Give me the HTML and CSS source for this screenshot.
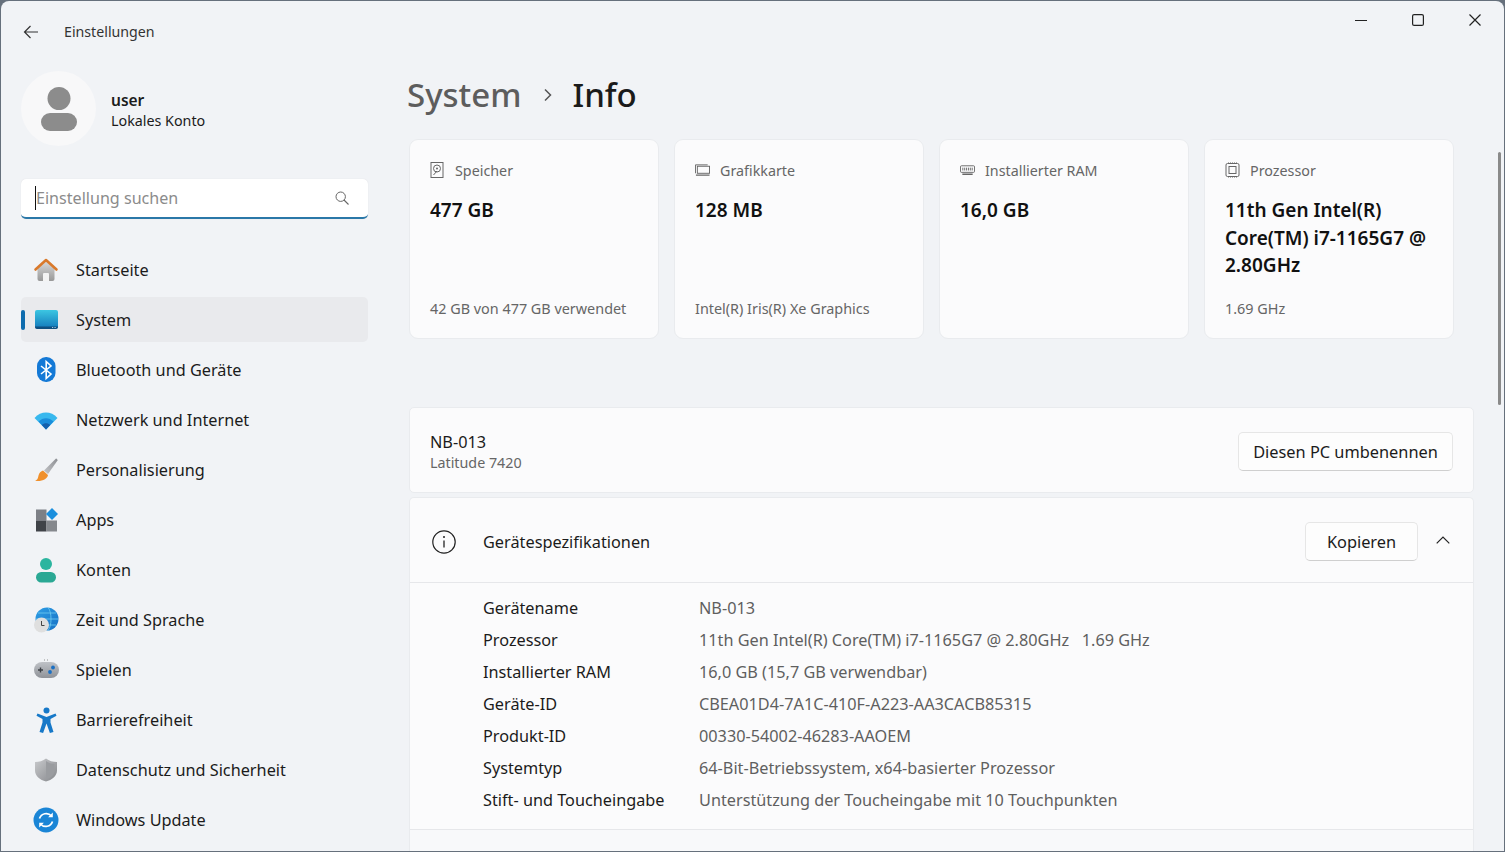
FILE: index.html
```html
<!DOCTYPE html>
<html lang="de">
<head>
    <meta charset="UTF-8">
    <meta name="viewport" content="width=device-width, initial-scale=1.0">
    <title>Einstellungen</title>
    <link rel="stylesheet" href="styles.css">
</head>
<body>
<div class="window">
    <!-- Title bar -->
    <header class="titlebar">
        <div class="titlebar-left">
            <svg class="back-icon" viewBox="0 0 16 14" width="16" height="14"><path d="M15 7H1.5M7.5 1 1.5 7l6 6" fill="none" stroke="#333" stroke-width="1.2"/></svg>
            <span class="app-title">Einstellungen</span>
        </div>
        <div class="window-controls">
            <svg viewBox="0 0 12 12" width="12" height="12"><path d="M0 6.5h12" stroke="#222" stroke-width="1.2"/></svg>
            <svg viewBox="0 0 12 12" width="12" height="12"><rect x=".6" y=".6" width="10.8" height="10.8" rx="1.5" fill="none" stroke="#222" stroke-width="1.2"/></svg>
            <svg viewBox="0 0 12 12" width="12" height="12"><path d="M.5.5l11 11M11.500.5l-11 11" stroke="#222" stroke-width="1.2"/></svg>
        </div>
    </header>

    <div class="main">
        <!-- Sidebar -->
        <aside class="sidebar">
            <div class="profile">
                <div class="avatar">
                    <svg viewBox="0 0 38 44" width="38" height="44"><circle cx="19" cy="11.500" r="11.500" fill="#8c8c8c"/><rect x="1" y="26" width="36" height="18" rx="9" fill="#8c8c8c"/></svg>
                </div>
                <div class="profile-text">
                    <div class="profile-name">user</div>
                    <div class="profile-type">Lokales Konto</div>
                </div>
            </div>

            <div class="search">
                <span class="search-caret"></span>
                <span class="search-text">Einstellung suchen</span>
                <svg viewBox="0 0 14 14" width="14" height="14"><circle cx="5.700" cy="5.700" r="4.700" fill="none" stroke="#666" stroke-width="1"/><path d="M9 9l4.500 4.500" stroke="#666" stroke-width="1.100"/></svg>
            </div>

            <nav class="nav">
                <a class="nav-item">
                    <svg class="nav-icon" viewBox="0 0 24 24"><defs><linearGradient id="homeBody" x1="0" y1="0" x2="0" y2="1"><stop offset="0" stop-color="#d8d8d8"/><stop offset="1" stop-color="#989898"/></linearGradient></defs><path d="M3.500 10.500 12 3.500l8.500 7V21a2 2 0 0 1-2 2h-13a2 2 0 0 1-2-2z" fill="url(#homeBody)"/><path d="M9 23v-7a1 1 0 0 1 1-1h4a1 1 0 0 1 1 1v7z" fill="#f3f3f3"/><path d="M1.500 11.500 12 2l10.500 9.500" fill="none" stroke="#d9792b" stroke-width="2.600" stroke-linecap="round" stroke-linejoin="round"/></svg>
                    <span>Startseite</span>
                </a>
                <a class="nav-item active">
                    <svg class="nav-icon" viewBox="0 0 24 24"><defs><linearGradient id="sysScreen" x1="0" y1="0" x2="0" y2="1"><stop offset="0" stop-color="#3cc6e2"/><stop offset="1" stop-color="#1379bb"/></linearGradient></defs><rect x="1" y="2" width="23" height="18.500" rx="2" fill="url(#sysScreen)"/><path d="M1 18.500h23V19a2 2 0 0 1-2 2H3a2 2 0 0 1-2-2z" fill="#0f4f80"/><path d="M18 19.500h1.200M20.500 19.500h1.200" stroke="#cfe8f5" stroke-width=".8"/></svg>
                    <span>System</span>
                </a>
                <a class="nav-item">
                    <svg class="nav-icon" viewBox="0 0 24 24"><rect x="3" y="-1" width="18.500" height="25" rx="9" fill="#1479d6"/><path d="M7 8l10 8-4.800 4.500V3.500L17 8 7 16" fill="none" stroke="#fff" stroke-width="1.600"/></svg>
                    <span>Bluetooth und Geräte</span>
                </a>
                <a class="nav-item">
                    <svg class="nav-icon" viewBox="0 0 24 24"><path d="M.5 10C7 2.800 17 2.800 23.500 10L12 21.500z" fill="#38b8ee"/><path d="M4.500 13.500C9 9 15 9 19.500 13.500L12 21.500z" fill="#1b8ddb"/><path d="M7.800 17C10.200 14.800 13.800 14.800 16.200 17L12 21.500z" fill="#1560ac"/></svg>
                    <span>Netzwerk und Internet</span>
                </a>
                <a class="nav-item">
                    <svg class="nav-icon" viewBox="0 0 24 24"><defs><linearGradient id="brushHandle" x1="1" y1="0" x2="0" y2="1"><stop offset="0" stop-color="#8d8f94"/><stop offset="1" stop-color="#c4c5c8"/></linearGradient></defs><path d="M22 .5c1 .4 1.500 1 1.500 2L14 16l-4-3.500z" fill="url(#brushHandle)"/><path d="M9 12.500l5 4.500c-.5 3.500-5 6.800-13 6 3-1.500 3-3.500 3.500-5.500.5-2.500 2.500-4.500 4.500-5z" fill="#f0902c"/></svg>
                    <span>Personalisierung</span>
                </a>
                <a class="nav-item">
                    <svg class="nav-icon" viewBox="0 0 24 24"><rect x="2" y="1.500" width="10.500" height="11" fill="#7d8086"/><rect x="2" y="12.500" width="10.500" height="11" fill="#404348"/><rect x="12.500" y="12.500" width="10.500" height="11" fill="#85888d"/><path d="M18 0l6 6-6 6-6-6z" fill="#1b8fdd"/></svg>
                    <span>Apps</span>
                </a>
                <a class="nav-item">
                    <svg class="nav-icon" viewBox="0 0 24 24"><circle cx="12" cy="6" r="6" fill="#2bb59f"/><rect x="2" y="14" width="20" height="10.500" rx="5.200" fill="#2aa894"/></svg>
                    <span>Konten</span>
                </a>
                <a class="nav-item">
                    <svg class="nav-icon" viewBox="0 0 24 24"><defs><linearGradient id="globeFill" x1="0" y1="0" x2="1" y2="1"><stop offset="0" stop-color="#2f9fe6"/><stop offset="1" stop-color="#1670c4"/></linearGradient></defs><circle cx="13" cy="11" r="11.500" fill="url(#globeFill)"/><path d="M14 -.5c4 4 4 19 0 23M2 11h22M4 5h18M4 17h18" fill="none" stroke="#6fcdf2" stroke-width=".8"/><circle cx="7.500" cy="17" r="7.500" fill="#dfdfdf"/><path d="M7.500 13v4.500h3" fill="none" stroke="#444" stroke-width="1"/></svg>
                    <span>Zeit und Sprache</span>
                </a>
                <a class="nav-item">
                    <svg class="nav-icon" viewBox="0 0 24 24"><defs><linearGradient id="padFill" x1="0" y1="0" x2="0" y2="1"><stop offset="0" stop-color="#bfc2c7"/><stop offset="1" stop-color="#8f9298"/></linearGradient></defs><rect x="0" y="4" width="25" height="16" rx="8" fill="url(#padFill)"/><path d="M4 12h5M6.500 9.500v5" stroke="#3d4046" stroke-width="1.400"/><circle cx="19" cy="9.500" r="1.900" fill="#1a6fc4"/><circle cx="16" cy="14" r="1.900" fill="#1a6fc4"/><path d="M10 2h1M13 2h1" stroke="#777" stroke-width=".8"/></svg>
                    <span>Spielen</span>
                </a>
                <a class="nav-item">
                    <svg class="nav-icon" viewBox="0 0 24 24"><circle cx="12.500" cy="2.500" r="3" fill="#1678c8"/><path d="M3.500 5.500 12.500 9l9-3.500 1 2.200-6 3.300 0 3.500 3 9.500-3.600 1-3.400-9.500-3.400 9.500-3.600-1 3-9.500 0-3.500-6-3.300z" fill="#1678c8"/></svg>
                    <span>Barrierefreiheit</span>
                </a>
                <a class="nav-item">
                    <svg class="nav-icon" viewBox="0 0 24 24"><defs><linearGradient id="shieldBody" x1="0" y1="0" x2="1" y2="1"><stop offset="0" stop-color="#c9cacd"/><stop offset="1" stop-color="#85878b"/></linearGradient></defs><path d="M12 .5c3 2.500 7 3.500 11 3.500v8.500c0 5.500-5 9.500-11 11C6 22 1 18 1 12.500V4c4 0 8-1 11-3.500z" fill="url(#shieldBody)"/><path d="M12 3c2.500 2 5.500 3 8.500 3v6.500c0 4.500-4 7.500-8.500 9z" fill="#9a9ca0"/></svg>
                    <span>Datenschutz und Sicherheit</span>
                </a>
                <a class="nav-item">
                    <svg class="nav-icon" viewBox="0 0 24 24"><circle cx="12" cy="12" r="12.500" fill="#1a85d6"/><path d="M5.500 10.500A7 7 0 0 1 17.500 8M18.500 13.500A7 7 0 0 1 6.500 16" fill="none" stroke="#fff" stroke-width="1.700"/><path d="M18.800 4.500v4.700h-4.700zM5.200 19.500v-4.700h4.700z" fill="#fff"/></svg>
                    <span>Windows Update</span>
                </a>
            </nav>
        </aside>

        <!-- Page content -->
        <main class="content">
            <h1 class="breadcrumb">
                <span class="crumb-parent">System</span>
                <svg class="crumb-sep" viewBox="0 0 8 14" width="8" height="14"><path d="M1 1.500 6.500 7 1 12.500" fill="none" stroke="#555" stroke-width="1.500"/></svg>
                <span class="crumb-current">Info</span>
            </h1>

            <div class="cards">
                <div class="card">
                    <div class="card-label">
                        <svg viewBox="0 0 14 16" width="14" height="16"><rect x=".5" y=".5" width="12" height="15" fill="none" stroke="#666"/><circle cx="6.500" cy="6.500" r="3.500" fill="none" stroke="#666"/><circle cx="6.500" cy="6.500" r="1" fill="#666"/><path d="M3 13l3.500-4" stroke="#666"/></svg>
                        <span>Speicher</span>
                    </div>
                    <div class="card-value">477 GB</div>
                    <div class="card-sub">42 GB von 477 GB verwendet</div>
                </div>
                <div class="card">
                    <div class="card-label">
                        <svg viewBox="0 0 16 14" width="16" height="14"><path d="M.5 1.500h13M.5 1.500v9" fill="none" stroke="#666"/><rect x="2.500" y="3" width="13" height="7.500" fill="none" stroke="#666"/><path d="M1 12.500h14.500" stroke="#666" stroke-width="1.400"/></svg>
                        <span>Grafikkarte</span>
                    </div>
                    <div class="card-value">128 MB</div>
                    <div class="card-sub">Intel(R) Iris(R) Xe Graphics</div>
                </div>
                <div class="card">
                    <div class="card-label">
                        <svg viewBox="0 0 16 12" width="16" height="12"><rect x=".5" y="1.500" width="15" height="7" rx="1" fill="none" stroke="#666"/><path d="M3 3.500v3M5 3.500v3M7 3.500v3M9 3.500v3M11 3.500v3M13 3.500v3" stroke="#666"/><path d="M2.500 10.500h11" stroke="#666" stroke-width="1.400"/></svg>
                        <span>Installierter RAM</span>
                    </div>
                    <div class="card-value">16,0 GB</div>
                </div>
                <div class="card">
                    <div class="card-label">
                        <svg viewBox="0 0 14 16" width="14" height="16"><rect x=".5" y="1.500" width="13" height="13" rx="1.500" fill="none" stroke="#666"/><rect x="3.500" y="4.500" width="7" height="7" fill="none" stroke="#666"/><path d="M3 .5v1M5 .5v1M7 .5v1M9 .5v1M11 .5v1M3 14.500v1M5 14.500v1M7 14.500v1M9 14.500v1M11 14.500v1" stroke="#666"/></svg>
                        <span>Prozessor</span>
                    </div>
                    <div class="card-value">11th Gen Intel(R) Core(TM) i7-1165G7 @ 2.80GHz</div>
                    <div class="card-sub">1.69 GHz</div>
                </div>
            </div>

            <section class="panel rename-panel">
                <div class="device-text">
                    <div class="device-name">NB-013</div>
                    <div class="device-model">Latitude 7420</div>
                </div>
                <button class="btn btn-rename">Diesen PC umbenennen</button>
            </section>

            <section class="panel specs-panel">
                <div class="specs-header">
                    <svg class="info-icon" viewBox="0 0 24 24" width="24" height="24"><circle cx="12" cy="12" r="11.200" fill="none" stroke="#222" stroke-width="1.200"/><path d="M12 10.500v7" stroke="#222" stroke-width="1.300"/><circle cx="12" cy="7" r="1" fill="#222"/></svg>
                    <span class="specs-title">Gerätespezifikationen</span>
                    <button class="btn btn-copy">Kopieren</button>
                    <svg class="chevron" viewBox="0 0 14 8" width="14" height="8"><path d="M.7 7.300 7 1l6.300 6.300" fill="none" stroke="#222" stroke-width="1.200"/></svg>
                </div>
                <dl class="specs-list">
                    <dt>Gerätename</dt><dd>NB-013</dd>
                    <dt>Prozessor</dt><dd>11th Gen Intel(R) Core(TM) i7-1165G7 @ 2.80GHz &nbsp; 1.69 GHz</dd>
                    <dt>Installierter RAM</dt><dd>16,0 GB (15,7 GB verwendbar)</dd>
                    <dt>Geräte-ID</dt><dd>CBEA01D4-7A1C-410F-A223-AA3CACB85315</dd>
                    <dt>Produkt-ID</dt><dd>00330-54002-46283-AAOEM</dd>
                    <dt>Systemtyp</dt><dd>64-Bit-Betriebssystem, x64-basierter Prozessor</dd>
                    <dt>Stift- und Toucheingabe</dt><dd>Unterstützung der Toucheingabe mit 10 Touchpunkten</dd>
                </dl>
                <div class="specs-footer"></div>
            </section>

            <div class="scrollbar-thumb"></div>
        </main>
    </div>
</div>
</body>
</html>
```

FILE: styles.css
```css
html, body {
    margin: 0;
    height: 852px;
    overflow: hidden;
}
body {
    font-family: "Noto Sans", "Open Sans", Arial, sans-serif;
    background-color: #66707c;
    color: #1b1b1b;
}
.window {
    height: 850px;
    margin: 1px 1px 1px 1px;
    border-radius: 8px 8px 0 0;
    background-color: #f1f3f6;
    display: flex;
    flex-direction: column;
    overflow: hidden;
}

/* Title bar */
.titlebar {
    height: 61px;
    flex-shrink: 0;
    display: flex;
    justify-content: space-between;
}
.titlebar-left {
    display: flex;
    align-items: center;
    padding-left: 22px;
    height: 61px;
}
.back-icon {
    margin-right: 25px;
}
.app-title {
    font-size: 14.2px;
    color: #333;
}
.window-controls {
    display: flex;
    gap: 45px;
    padding: 13px 23px 0 0;
    height: 12px;
}

.main {
    flex: 1;
    display: flex;
    min-height: 0;
}

/* Sidebar */
.sidebar {
    width: 387px;
    flex-shrink: 0;
    box-sizing: border-box;
    padding: 9px 20px 0 20px;
}
.profile {
    display: flex;
    align-items: center;
    gap: 15px;
}
.avatar {
    width: 75px;
    height: 75px;
    border-radius: 50%;
    background-color: #f8f8f9;
    display: flex;
    align-items: center;
    justify-content: center;
}
.profile-text {
    padding-top: 3px;
}
.profile-name {
    font-size: 15.500px;
    font-weight: 600;
    line-height: 21px;
}
.profile-type {
    font-size: 14.300px;
    line-height: 20px;
}
.search {
    margin-top: 33px;
    height: 40px;
    box-sizing: border-box;
    background-color: #fff;
    border-radius: 5px;
    border-bottom: 2px solid #2a78a8;
    box-shadow: 0 0 1px #d5d7da;
    display: flex;
    align-items: center;
    padding: 0 19px 0 14px;
}
.search-text {
    flex: 1;
    font-size: 16.100px;
    color: #8b8b8b;
}
.search-caret {
    width: 1px;
    height: 24px;
    background-color: #111;
}
.nav {
    margin-top: 28px;
    display: flex;
    flex-direction: column;
    gap: 5px;
}
.nav-item {
    height: 45px;
    display: flex;
    align-items: center;
    padding-left: 13px;
    border-radius: 5px;
    font-size: 16.250px;
    position: relative;
}
.nav-item.active {
    background-color: #e9eaed;
}
.nav-item.active::before {
    content: "";
    position: absolute;
    left: 0;
    top: 13px;
    width: 4px;
    height: 20px;
    border-radius: 2px;
    background-color: #0f6cae;
}
.nav-icon {
    width: 24px;
    height: 24px;
    margin-right: 18px;
    flex-shrink: 0;
    overflow: visible;
}

/* Content */
.content {
    flex: 1;
    padding: 9px 30px 0 21px;
    min-width: 0;
    position: relative;
}
.breadcrumb {
    margin: 0 0 20px -2px;
    height: 48px;
    display: flex;
    align-items: center;
    font-size: 33px;
    font-weight: 500;
    line-height: 48px;
}
.crumb-parent {
    color: #5d5d5d;
}
.crumb-sep {
    margin: 0 20px 0 23px;
}
.crumb-current {
    color: #1b1b1b;
}
.cards {
    display: grid;
    grid-template-columns: repeat(4, 250px);
    gap: 15px;
}
.card {
    height: 200px;
    box-sizing: border-box;
    padding: 19px 20px 19px 20px;
    background-color: #fbfbfc;
    border: 1px solid #e9ebee;
    border-radius: 9px;
    display: flex;
    flex-direction: column;
}
.card-label {
    display: flex;
    align-items: center;
    gap: 10px;
    height: 22px;
    font-size: 14.300px;
    color: #666;
}
.card-label svg {
    flex: 0 0 15px;
}
.card-value {
    margin-top: 16px;
    font-size: 19px;
    font-weight: 600;
    line-height: 27.500px;
    color: #111;
}
.card-sub {
    margin-top: auto;
    font-size: 14.400px;
    line-height: 20px;
    color: #666;
}
.panel {
    background-color: #fbfbfc;
    border: 1px solid #e9ebee;
    border-radius: 5px;
}
.rename-panel {
    margin-top: 68px;
    height: 86px;
    box-sizing: border-box;
    display: flex;
    align-items: center;
    justify-content: space-between;
    padding: 3px 20px 0;
}
.device-text {
    padding-top: 2px;
}
.device-name {
    font-size: 16.300px;
    line-height: 21px;
}
.device-model {
    margin-top: -1px;
    font-size: 14.300px;
    line-height: 21px;
    color: #666;
}
.btn {
    height: 39px;
    font-family: inherit;
    font-size: 16.350px;
    color: #1b1b1b;
    background-color: #fdfdfd;
    border: 1px solid #e6e6e6;
    border-bottom-color: #cfcfcf;
    border-radius: 5px;
}
.btn-rename {
    width: 215px;
}
.specs-panel {
    margin-top: 4px;
    border-bottom: none;
    border-radius: 5px 5px 0 0;
}
.specs-header {
    height: 85px;
    box-sizing: border-box;
    display: flex;
    align-items: center;
    padding: 3px 23px 0 22px;
    border-bottom: 1px solid #e6e7ea;
}
.info-icon {
    margin-right: 27px;
}
.specs-title {
    flex: 1;
    font-size: 16.300px;
}
.btn-copy {
    width: 113px;
    margin-right: 18px;
}
.chevron {
    margin-bottom: 4px;
}
.specs-list {
    margin: 0;
    padding: 9px 20px 13px 73px;
    display: grid;
    grid-template-columns: 216px 1fr;
    grid-auto-rows: 32px;
    align-items: center;
    font-size: 16.250px;
}
.specs-list dd {
    margin: 0;
    color: #5f5f5f;
}
.specs-footer {
    height: 30px;
    background-color: #f8f9fa;
    border-top: 1px solid #e6e7ea;
}
.scrollbar-thumb {
    position: absolute;
    right: 3px;
    top: 90px;
    width: 3px;
    height: 253px;
    border-radius: 2px;
    background-color: #8a8a8a;
}
```
